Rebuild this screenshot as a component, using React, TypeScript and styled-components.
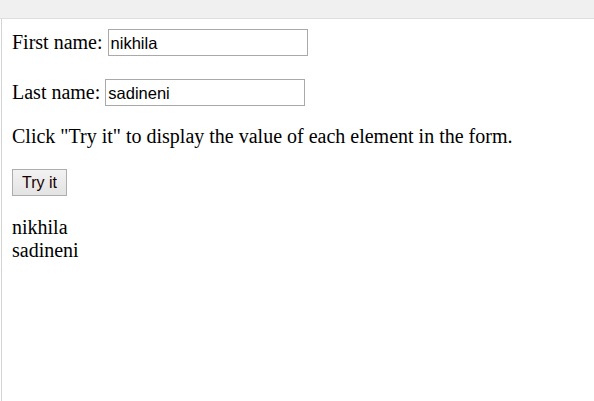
import React from "react";
import styled, { createGlobalStyle } from "styled-components";

const Global = createGlobalStyle`
  html, body { margin: 0; padding: 0; background: #fff; }
  body { width: 594px; height: 401px; overflow: hidden; }
`;

const Frame = styled.div`
  display: flex;
  flex-direction: column;
  width: 594px;
  height: 401px;
`;

const TopBar = styled.div`
  height: 18px;
  flex: none;
  background: #f0f0f0;
  border-bottom: 1px solid #dedede;
`;

const Content = styled.div`
  flex: 1;
  margin-left: 1px;
  border-left: 1px solid #d4d4d4;
  padding: 10px 10px 0 10px;
  font-family: "Liberation Serif", "Times New Roman", serif;
  font-size: 20px;
  line-height: 23px;
  color: #000;
`;

const Row = styled.div<{ $gap: number }>`
  display: flex;
  align-items: center;
  gap: 5px;
  height: 27px;
  margin-bottom: ${(p) => p.$gap}px;
`;

const Input = styled.input<{ $w: number }>`
  box-sizing: border-box;
  width: ${(p) => p.$w}px;
  height: 27px;
  margin: 0;
  padding: 1px 2px 0 2px;
  border: 1px solid #a9a9a9;
  font-family: "Liberation Sans", Arial, sans-serif;
  font-size: 16.5px;
  color: #000;
  outline: none;
`;

const Para = styled.p`
  margin: 0 0 21px 0;
`;

const Button = styled.button`
  box-sizing: border-box;
  height: 27px;
  width: 55px;
  margin: 0 0 20px 0;
  padding: 0;
  border: 1px solid #adadad;
  border-radius: 0;
  background: linear-gradient(#f2f2f2, #e3e3e3);
  font-family: "Liberation Sans", Arial, sans-serif;
  font-size: 16px;
  color: #1a0000;
  display: block;
`;

const Output = styled.div``;

export default function App() {
  return (
    <Frame>
      <Global />
      <TopBar />
      <Content>
        <Row $gap={23}>
          <span>First name:</span>
          <Input $w={200} defaultValue="nikhila" />
        </Row>
        <Row $gap={19}>
          <span>Last name:</span>
          <Input $w={200} defaultValue="sadineni" />
        </Row>
        <Para>Click "Try it" to display the value of each element in the form.</Para>
        <Button>Try it</Button>
        <Output>
          nikhila
          <br />
          sadineni
        </Output>
      </Content>
    </Frame>
  );
}
